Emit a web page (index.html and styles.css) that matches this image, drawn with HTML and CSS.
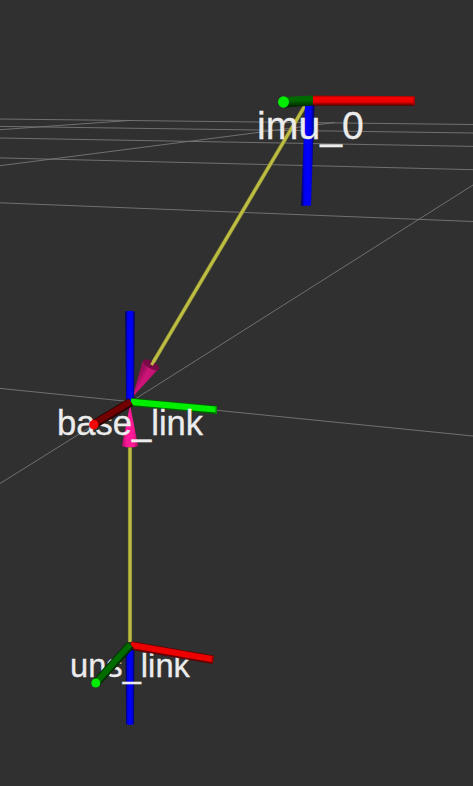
FILE: index.html
```html
<!DOCTYPE html>
<html lang="en">
<head>
<meta charset="utf-8">
<title>TF view</title>
<link rel="stylesheet" href="styles.css">
</head>
<body>
<svg class="scene" viewBox="0 0 473 786" width="473" height="786">
  <defs>
    <linearGradient id="red" gradientUnits="userSpaceOnUse" x1="360" y1="95.5" x2="360" y2="106">
      <stop offset="0" stop-color="#990000"/><stop offset=".2" stop-color="#f40000"/><stop offset=".6" stop-color="#ee0000"/><stop offset="1" stop-color="#440000"/>
    </linearGradient>
    <linearGradient id="green" x1="0" y1="0" x2="0" y2="1">
      <stop offset="0" stop-color="#006800"/><stop offset=".4" stop-color="#006900"/><stop offset="1" stop-color="#001c00"/>
    </linearGradient>
    <linearGradient id="blue" x1="0" y1="0" x2="1" y2="0">
      <stop offset="0" stop-color="#000050"/><stop offset=".25" stop-color="#0000e8"/><stop offset=".5" stop-color="#0000ff"/><stop offset=".75" stop-color="#0000e8"/><stop offset="1" stop-color="#000050"/>
    </linearGradient>
    <linearGradient id="pink" x1="0" y1="0" x2="1" y2="0">
      <stop offset="0" stop-color="#a40c60"/><stop offset=".3" stop-color="#ff1996"/><stop offset=".7" stop-color="#ff1996"/><stop offset="1" stop-color="#a40c60"/>
    </linearGradient>
    <linearGradient id="magenta" gradientUnits="userSpaceOnUse" x1="139" y1="376" x2="153" y2="384">
      <stop offset="0" stop-color="#9c0d5b"/><stop offset=".35" stop-color="#cf147a"/><stop offset=".65" stop-color="#c51375"/><stop offset="1" stop-color="#5e0837"/>
    </linearGradient>
  </defs>

  <g class="grid">
    <path d="M0 119L473 124.5M0 126.4L473 133M0 138L473 146.4M0 157.9L473 169.7M0 202.8L473 221.5M0 388.4L130 401.6L473 436"/>
    <path d="M0 129.7L132 120.3M0 165.7L240 134.8L335 122.5M0 483.5L130 402.3L473 185"/>
  </g>

  <!-- imu_0 -->
  <path class="arrow-edge" d="M306 104L151 366"/>
  <path class="arrow-line" d="M306 104L151 366"/>
  <path fill="url(#blue)" d="M305 105H314.5L311 205.8H301Z"/>
  <path fill="url(#green)" d="M285 97L313 95.5V105.5L285 107.5Z"/>
  <path fill="url(#red)" d="M313 95.5L414.5 96.3V105.8L313 105.8Z"/>
  <path fill="#a80000" d="M413.5 96.5h1.2v9h-1.2z"/>
  <ellipse class="green-tip" cx="283.5" cy="102" rx="5.5" ry="5.8"/>
  <text class="label label-imu" x="257" y="138.7" textLength="106.8">imu_0</text>

  <!-- base_link -->
  <path fill="url(#pink)" d="M130 405L138.2 446Q130 449 121.8 446Z"/>
  <path class="arrow-edge" d="M130 447.5V642"/>
  <path class="arrow-line" d="M130 447.5V642"/>
  <path fill="url(#magenta)" d="M132.5 397L142.5 361.5L159.5 368Z"/>
  <ellipse cx="151.2" cy="364.8" rx="9" ry="3.7" transform="rotate(29 151.2 364.8)" fill="#760b46"/>
  <path class="arrow-line" d="M156 357.5L151.5 365"/>
  <path fill="url(#blue)" d="M125.2 311.5Q130 310 134.8 311.5L134 401H126Z"/>
  <path class="green-dark" d="M131 402L216.5 410"/>
  <path class="green-light" d="M131 401.8L216 409.5"/>
  <path fill="#009900" d="M215.4 405.8l1.5.2v8l-1.5-.2z"/>
  <text class="label label-base" x="57" y="435.3" textLength="146.1">base_link</text>
  <path class="maroon-edge" d="M131 402L94.5 424"/>
  <path class="maroon" d="M130.7 401.7L94 423.5"/>
  <circle class="red-tip" cx="93.8" cy="424.7" r="4.7"/>
  <path class="tip-line" d="M91 426.5L97 422.5"/>

  <!-- uns_link -->
  <path fill="url(#blue)" d="M125.6 646H134.4L134 724Q130 726 126 724Z"/>
  <text class="label label-uns" x="70" y="676.8" textLength="119.9">uns_link</text>
  <path class="red-edge" d="M131 645.5L213 659.7"/>
  <path class="red-light" d="M131 645L213 659.2"/>
  <path fill="#990000" d="M212 655.5l1.7.3-.6 7.5-1.7-.3z"/>
  <path class="forest-edge" d="M130.5 645L97 682"/>
  <path class="forest" d="M130 644.6L97 681.5"/>
  <circle class="green-tip" cx="95.8" cy="683" r="4.5"/>
</svg>
</body>
</html>
```
FILE: styles.css
```css
body {
  margin: 0;
  background: #303030;
  overflow: hidden;
}

.scene {
  display: block;
  background: #303030;
}

.scene path {
  stroke-linecap: butt;
}

.grid path {
  fill: none;
  stroke: #777;
  stroke-width: 0.9;
}

.label {
  font-family: "Liberation Sans", Arial, sans-serif;
  fill: #ececec;
  stroke: #ececec;
  stroke-width: 0.3;
}

.label-imu { font-size: 39.2px; }
.label-base { font-size: 34.6px; }
.label-uns { font-size: 32.7px; }

.arrow-edge { stroke: #77772f; stroke-width: 4.2; }
.arrow-line { stroke: #bdbd43; stroke-width: 3; }

.green-dark { stroke: #006000; stroke-width: 8.6; }
.green-light { stroke: #00ee00; stroke-width: 6.2; }
.green-tip { fill: #00ec00; }

.maroon-edge { stroke: #2c0000; stroke-width: 9; }
.maroon { stroke: #720000; stroke-width: 6; }
.red-tip { fill: #ff0000; }
.tip-line { stroke: #c93030; stroke-width: 0.8; }

.red-edge { stroke: #650000; stroke-width: 8.6; }
.red-light { stroke: #ec0000; stroke-width: 6; }

.forest-edge { stroke: #002c00; stroke-width: 8.8; }
.forest { stroke: #006c00; stroke-width: 6; }
```
